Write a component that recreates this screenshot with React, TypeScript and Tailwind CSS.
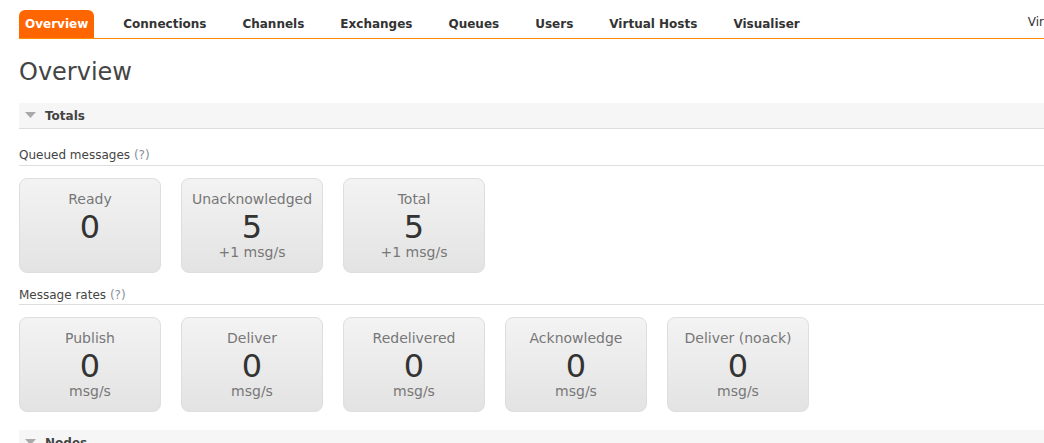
const tabs = ["Overview", "Connections", "Channels", "Exchanges", "Queues", "Users", "Virtual Hosts", "Visualiser"];

const queued = [
  { label: "Ready", value: "0", sub: "" },
  { label: "Unacknowledged", value: "5", sub: "+1 msg/s" },
  { label: "Total", value: "5", sub: "+1 msg/s" },
];

const rates = [
  { label: "Publish", value: "0", sub: "msg/s" },
  { label: "Deliver", value: "0", sub: "msg/s" },
  { label: "Redelivered", value: "0", sub: "msg/s" },
  { label: "Acknowledge", value: "0", sub: "msg/s" },
  { label: "Deliver (noack)", value: "0", sub: "msg/s" },
];

export default function App() {
  return (
    <div className="h-[443px] w-[1044px] overflow-hidden bg-white text-[#444] font-['DejaVu_Sans',Verdana,sans-serif]">
      <div className="w-[1200px] pl-[19px]">
        <nav className="flex items-end pt-[10px] border-b border-[#ff8c00]">
          <ul className="flex gap-[22px]">
            {tabs.map((t, i) => (
              <li
                key={t}
                className={
                  i === 0
                    ? "h-[28px] px-[6px] rounded-t-[6px] bg-[#ff6600] text-white text-[12px] font-bold leading-[28px]"
                    : "h-[28px] px-[7px] text-[#333] text-[12px] font-bold leading-[28px]"
                }
              >
                {t}
              </li>
            ))}
          </ul>
          <div className="ml-[221px] self-start pt-[3px] text-[12px] text-[#333]">Virtual host: All</div>
        </nav>

        <h1 className="mt-[19px] h-[29px] text-[24px] leading-[29px] text-[#444]">Overview</h1>

        <SectionBar title="Totals" className="mt-[16px]" />

        <SubHeading title="Queued messages" className="mt-[18px] pb-[2px]" />
        <div className="mt-[12px] flex gap-[20px]">
          {queued.map((c) => (
            <Stat key={c.label} {...c} />
          ))}
        </div>

        <SubHeading title="Message rates" className="mt-[14px] pb-[1px]" />
        <div className="mt-[12px] flex gap-[20px]">
          {rates.map((c) => (
            <Stat key={c.label} {...c} />
          ))}
        </div>

        <SectionBar title="Nodes" className="mt-[18px]" />
      </div>
    </div>
  );
}

function SectionBar({ title, className }: { title: string; className?: string }) {
  return (
    <div className={`flex h-[26px] items-center border-b border-[#dddddd] bg-[#f6f6f6] pl-[6px] ${className ?? ""}`}>
      <svg width="11" height="7" viewBox="0 0 11 7" className="mr-[9px]">
        <path d="M0 0 L11 0 L5.5 6 Z" fill="#a9a9a9" />
      </svg>
      <span className="text-[12px] font-bold text-[#444]">{title}</span>
    </div>
  );
}

function SubHeading({ title, className }: { title: string; className?: string }) {
  return (
    <div className={`border-b border-[#dddddd] text-[12px] leading-[16px] text-[#444] ${className ?? ""}`}>
      {title} <span className="text-[#8a8f99]">(?)</span>
    </div>
  );
}

function Stat({ label, value, sub }: { label: string; value: string; sub: string }) {
  return (
    <div className="flex h-[95px] w-[142px] flex-col items-center rounded-[8px] border border-[#dedede] bg-linear-to-b from-[#f3f3f3] to-[#e3e3e3] pt-[12px]">
      <div className="h-[17px] text-[14px] leading-[17px] text-[#777]">{label}</div>
      <div className="mt-[2px] h-[34px] text-[32px] leading-[34px] text-[#333]">{value}</div>
      <div className="h-[17px] text-[14px] leading-[17px] text-[#777]">{sub}</div>
    </div>
  );
}
